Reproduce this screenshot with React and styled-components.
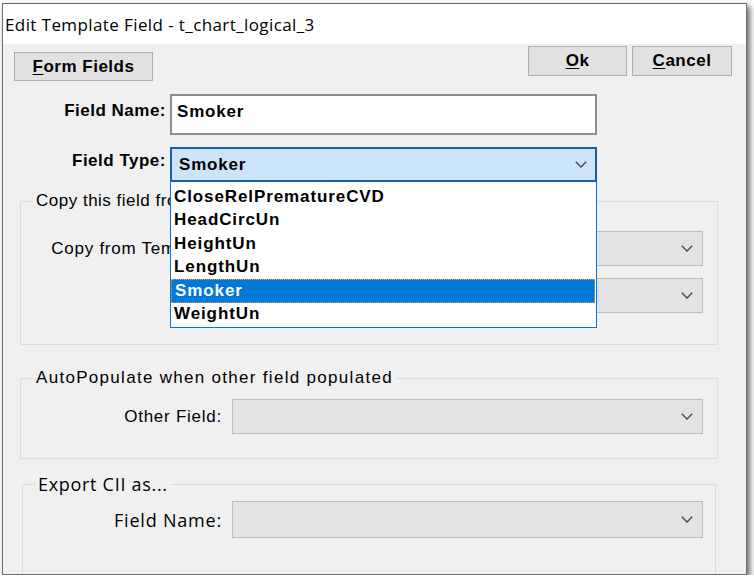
import React from "react";
import styled, { createGlobalStyle } from "styled-components";

const GlobalStyle = createGlobalStyle`
  body {
    margin: 0;
    background: #ffffff;
  }
`;

const Page = styled.div`
  padding: 3px 0 0 2px;
`;

const Window = styled.div`
  box-sizing: border-box;
  width: 745px;
  height: 572px;
  display: flex;
  flex-direction: column;
  border: 1px solid #6e6e6e;
  box-shadow: 3px 3px 6px rgba(0, 0, 0, 0.6);
  overflow: hidden;
  background: #f0f0f0;
`;

const TitleBar = styled.div`
  height: 40px;
  flex-shrink: 0;
  display: flex;
  align-items: center;
  padding-left: 2px;
  background: #ffffff;
  font-family: "Open Sans", sans-serif;
  font-size: 17px;
  letter-spacing: 0.4px;
  color: #000;
`;

const Body = styled.div`
  flex: 1;
  display: flex;
  flex-direction: column;
  font-family: "Liberation Sans", Arial, sans-serif;
  color: #000;
`;

const TopBar = styled.div`
  height: 36px;
  flex-shrink: 0;
  box-sizing: border-box;
  display: flex;
  justify-content: space-between;
  align-items: flex-start;
  padding: 2px 14px 0 11px;
`;

const ButtonGroup = styled.div`
  display: flex;
  gap: 5px;
`;

const Button = styled.button`
  box-sizing: border-box;
  width: ${(p) => p.$width}px;
  height: ${(p) => p.$height}px;
  margin-top: ${(p) => p.$offset || 0}px;
  padding: 0;
  background: #e1e1e1;
  border: 1px solid #adadad;
  font-family: "Liberation Sans", Arial, sans-serif;
  font-weight: bold;
  font-size: 17px;
  letter-spacing: 0.5px;
  color: #000;

  u {
    text-decoration-thickness: 1px;
    text-underline-offset: 2px;
  }
`;

const FieldGrid = styled.div`
  display: grid;
  grid-template-columns: 167px 427px;
  row-gap: 12px;
  margin-top: 14px;
`;

const BoldLabel = styled.div`
  text-align: right;
  padding-right: 4px;
  padding-top: ${(p) => p.$top}px;
  font-weight: bold;
  font-size: 17px;
  line-height: 20px;
  letter-spacing: 0.5px;
`;

const TextInput = styled.div`
  box-sizing: border-box;
  height: 41px;
  padding: 6px 5px 0;
  background: #ffffff;
  border: 2px solid #8c8c8c;
  font-weight: bold;
  font-size: 17px;
  line-height: 20px;
  letter-spacing: 0.8px;
`;

const ComboWrap = styled.div`
  position: relative;
`;

const Combo = styled.div`
  box-sizing: border-box;
  height: 35px;
  display: flex;
  align-items: center;
  justify-content: space-between;
  padding: 0 8px 0 ${(p) => (p.$open ? 7 : 0)}px;
  background: ${(p) => (p.$open ? "#cce4f7" : "#e3e3e3")};
  border: ${(p) => (p.$open ? "2px solid #1461a8" : "1px solid #bcbcbc")};
  font-weight: bold;
  font-size: 17px;
  letter-spacing: 0.8px;
`;

const DropList = styled.div`
  position: absolute;
  top: 100%;
  left: 0;
  z-index: 10;
  box-sizing: border-box;
  width: 100%;
  height: 146px;
  padding-top: 3px;
  background: #ffffff;
  border: 1px solid #0078d7;
  border-top: none;
`;

const ListItem = styled.div`
  height: 23.5px;
  box-sizing: border-box;
  display: flex;
  align-items: center;
  margin-right: 1px;
  padding-left: ${(p) => (p.$selected ? 4 : 3)}px;
  background: ${(p) => (p.$selected ? "#0078d7" : "transparent")};
  color: ${(p) => (p.$selected ? "#ffffff" : "#000")};
  outline: ${(p) => (p.$selected ? "1px dotted #e8a040" : "none")};
  outline-offset: -1px;
  font-weight: bold;
  font-size: 17px;
  letter-spacing: 0.9px;
`;

const Group = styled.fieldset`
  margin: ${(p) => p.$top}px ${(p) => p.$right}px 0 ${(p) => p.$left}px;
  padding: 0 13px 0 0;
  border: 1px solid #dcdcdc;
  min-width: 0;
`;

const Legend = styled.legend`
  margin-left: 12px;
  padding: 0 3px;
  font-family: ${(p) =>
    p.$ui ? '"Open Sans", sans-serif' : '"Liberation Sans", Arial, sans-serif'};
  font-size: ${(p) => (p.$ui ? 18 : 17)}px;
  letter-spacing: ${(p) => p.$spacing}px;
  line-height: 20px;
`;

const GroupGrid = styled.div`
  display: grid;
  grid-template-columns: ${(p) => p.$labelWidth}px 471px;
  column-gap: 10px;
  row-gap: 12px;
  align-items: center;
  padding: ${(p) => p.$padTop}px 0 ${(p) => p.$padBottom}px 0;
  grid-auto-rows: ${(p) => p.$rowHeight || 35}px;
`;

const Label = styled.div`
  text-align: right;
  font-family: ${(p) =>
    p.$ui ? '"Open Sans", sans-serif' : '"Liberation Sans", Arial, sans-serif'};
  font-size: ${(p) => (p.$ui ? 18 : 17)}px;
  letter-spacing: ${(p) => (p.$ui ? 0.8 : 0.75)}px;
  line-height: 20px;
`;

const Select = styled(Combo)`
  height: 100%;
  padding-right: 9px;
  justify-content: flex-end;
`;

function Chevron() {
  return (
    <svg width="12" height="7" viewBox="0 0 12 7">
      <polyline
        points="0.8,0.8 6,6 11.2,0.8"
        fill="none"
        stroke="#444"
        strokeWidth="1.3"
      />
    </svg>
  );
}

const types = [
  "CloseRelPrematureCVD",
  "HeadCircUn",
  "HeightUn",
  "LengthUn",
  "Smoker",
  "WeightUn",
];

export default function App() {
  return (
    <Page>
      <GlobalStyle />
      <Window>
        <TitleBar>Edit Template Field - t_chart_logical_3</TitleBar>
        <Body>
          <TopBar>
            <Button $width={139} $height={29} $offset={6}>
              <u>F</u>orm Fields
            </Button>
            <ButtonGroup>
              <Button $width={99} $height={30}>
                <u>O</u>k
              </Button>
              <Button $width={100} $height={30}>
                <u>C</u>ancel
              </Button>
            </ButtonGroup>
          </TopBar>

          <FieldGrid>
            <BoldLabel $top={7}>Field Name:</BoldLabel>
            <TextInput>Smoker</TextInput>
            <BoldLabel $top={4}>Field Type:</BoldLabel>
            <ComboWrap>
              <Combo $open>
                <span>Smoker</span>
                <Chevron />
              </Combo>
              <DropList>
                {types.map((t) => (
                  <ListItem key={t} $selected={t === "Smoker"}>
                    {t}
                  </ListItem>
                ))}
              </DropList>
            </ComboWrap>
          </FieldGrid>

          <Group $top={9} $left={17} $right={28}>
            <Legend $spacing={0.5}>Copy this field from...</Legend>
            <GroupGrid $labelWidth={201} $padTop={20} $padBottom={31}>
              <Label>Copy from Template:</Label>
              <Select>
                <Chevron />
              </Select>
              <Label>Field:</Label>
              <Select>
                <Chevron />
              </Select>
            </GroupGrid>
          </Group>

          <Group $top={23} $left={17} $right={28}>
            <Legend $spacing={1.3}>AutoPopulate when other field populated</Legend>
            <GroupGrid $labelWidth={201} $padTop={11} $padBottom={24}>
              <Label>Other Field:</Label>
              <Select>
                <Chevron />
              </Select>
            </GroupGrid>
          </Group>

          <Group $top={15} $left={19} $right={30}>
            <Legend $ui $spacing={0.7}>
              Export CII as...
            </Legend>
            <GroupGrid
              $labelWidth={199}
              $padTop={7}
              $padBottom={40}
              $rowHeight={37}
            >
              <Label $ui>Field Name:</Label>
              <Select>
                <Chevron />
              </Select>
            </GroupGrid>
          </Group>
        </Body>
      </Window>
    </Page>
  );
}
